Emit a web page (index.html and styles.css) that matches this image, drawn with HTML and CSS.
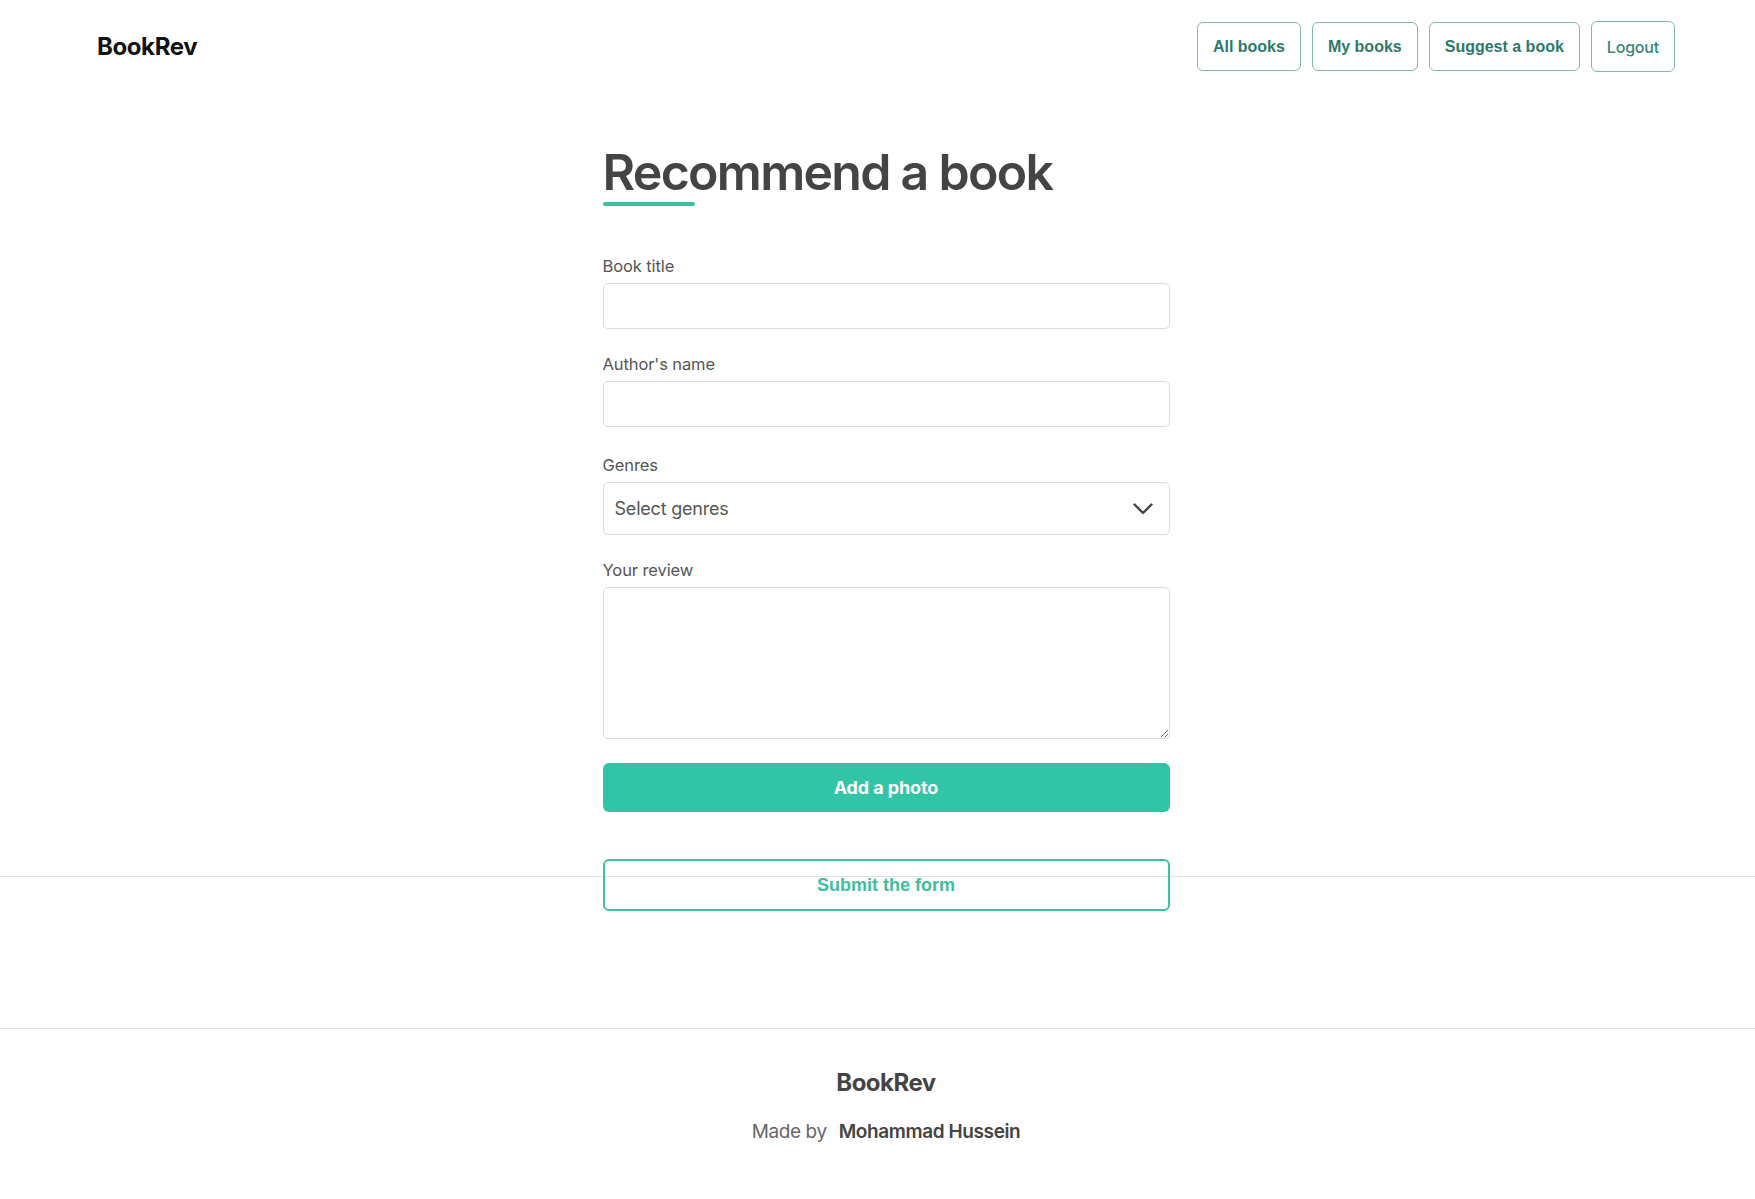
FILE: index.html
```html
<!DOCTYPE html>
<html lang="en">
<head>
<meta charset="utf-8">
<title>BookRev - Recommend a book</title>
<link rel="stylesheet" href="styles.css">
</head>
<body>
<header class="site-header">
  <a class="logo" href="#">BookRev</a>
  <nav class="nav">
    <a class="nav-btn" href="#">All books</a>
    <a class="nav-btn" href="#">My books</a>
    <a class="nav-btn" href="#">Suggest a book</a>
    <button class="nav-btn logout" type="button">Logout</button>
  </nav>
</header>

<main class="main">
  <form class="book-form">
    <h1 class="title">Recommend a book</h1>

    <div class="field">
      <label class="label" for="title">Book title</label>
      <input class="input" id="title" type="text">
    </div>

    <div class="field">
      <label class="label" for="author">Author's name</label>
      <input class="input" id="author" type="text">
    </div>

    <div class="field field-genres">
      <label class="label">Genres</label>
      <div class="select">
        <span class="select-text">Select genres</span>
        <svg class="chevron" width="20" height="12" viewBox="0 0 20 12" aria-hidden="true">
          <path d="M1.5 1.5 L10 10 L18.5 1.5" fill="none" stroke="#444" stroke-width="2.4" stroke-linecap="round" stroke-linejoin="round"/>
        </svg>
      </div>
    </div>

    <div class="field">
      <label class="label" for="review">Your review</label>
      <textarea class="textarea" id="review"></textarea>
    </div>

    <button class="btn-photo" type="button">Add a photo</button>
    <button class="btn-submit" type="submit">Submit the form</button>
  </form>
</main>

<footer class="footer">
  <div class="footer-logo">BookRev</div>
  <p class="credit"><span class="made">Made by</span><span class="author">Mohammad Hussein</span></p>
</footer>
</body>
</html>
```

FILE: styles.css
```css
* {
  box-sizing: border-box;
}

body {
  margin: 0;
  background: #ffffff;
  font-family: "Inter", "Lato", "Noto Sans", sans-serif;
  color: #444;
}

.site-header {
  display: flex;
  justify-content: space-between;
  align-items: center;
  padding: 21px 80px 0 97px;
  height: 72px;
}

.logo {
  font-size: 24px;
  font-weight: 700;
  color: #111;
  text-decoration: none;
  letter-spacing: -0.4px;
}

.nav {
  display: flex;
  align-items: center;
  gap: 11px;
}

.nav-btn {
  display: flex;
  align-items: center;
  height: 49px;
  padding: 0 15px;
  border: 1px solid #82b8ab;
  border-radius: 6px;
  background: #fff;
  color: #2d7a6a;
  font-family: "Liberation Sans", Arial, sans-serif;
  font-weight: 700;
  font-size: 16px;
  text-decoration: none;
}

.logout {
  height: 51px;
  padding: 0 15px;
  font-family: "Inter", "Lato", sans-serif;
  font-weight: 500;
  font-size: 16px;
  color: #3a8575;
  letter-spacing: -0.2px;
}

.main {
  display: flex;
  justify-content: center;
  align-items: flex-start;
  padding: 72px 0 0 17px;
  height: 805px;
  border-bottom: 1px solid #e2e2e2;
}

.book-form {
  width: 567px;
  display: flex;
  flex-direction: column;
}

.book-form > * {
  flex-shrink: 0;
}

.title {
  margin: 0;
  font-size: 50px;
  line-height: 56px;
  font-weight: 600;
  color: #444;
  letter-spacing: -1.7px;
}

.title::after {
  content: "";
  display: block;
  width: 92px;
  height: 4px;
  margin-top: 2px;
  border-radius: 2px;
  background: #3cbf9f;
}

.field {
  display: flex;
  flex-direction: column;
  margin-top: 25px;
}

.title + .field {
  margin-top: 50px;
}

.field-genres {
  margin-top: 28px;
}

.label {
  font-size: 16.5px;
  line-height: 20px;
  color: #555;
  margin-bottom: 7px;
  letter-spacing: -0.1px;
}

.input {
  height: 46px;
  border: 1px solid #dcdcdc;
  border-radius: 5px;
  background: #fff;
  font: inherit;
  padding: 0 12px;
}

.select {
  display: flex;
  align-items: center;
  justify-content: space-between;
  height: 53px;
  border: 1px solid #dcdcdc;
  border-radius: 5px;
  padding: 0 16px 0 11px;
}

.select-text {
  font-size: 18px;
  color: #555;
  letter-spacing: -0.2px;
}

.chevron {
  display: block;
}

.textarea {
  height: 152px;
  border: 1px solid #dcdcdc;
  border-radius: 5px;
  font: inherit;
  padding: 10px 12px;
  resize: both;
}

.btn-photo {
  margin-top: 24px;
  height: 49px;
  border: none;
  border-radius: 6px;
  background: #32c4a6;
  color: #fff;
  font-family: "Inter", "Lato", sans-serif;
  font-size: 18px;
  font-weight: 700;
  letter-spacing: -0.1px;
}

.btn-submit {
  margin-top: 47px;
  height: 52px;
  border: 2px solid #3fc2a4;
  border-radius: 6px;
  background: transparent;
  color: #3dbf9f;
  font-family: "Liberation Sans", Arial, sans-serif;
  font-size: 18px;
  font-weight: 700;
}

.footer {
  margin-top: 151px;
  border-top: 1px solid #e2e2e2;
  padding: 39px 0 40px 17px;
  display: flex;
  flex-direction: column;
  align-items: center;
}

.footer-logo {
  font-size: 24px;
  line-height: 30px;
  font-weight: 700;
  color: #444;
  letter-spacing: -0.5px;
}

.credit {
  margin: 22px 0 0;
  font-size: 19px;
  line-height: 24px;
  display: flex;
  gap: 12px;
}

.made {
  color: #666;
  font-weight: 400;
  letter-spacing: -0.4px;
}

.author {
  color: #444;
  font-weight: 600;
  letter-spacing: -0.4px;
}
```
